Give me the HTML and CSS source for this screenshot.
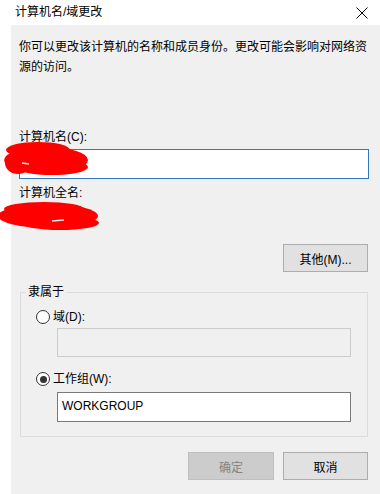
FILE: index.html
```html
<!doctype html>
<html lang="zh-CN">

<head>
	<meta charset="UTF-8">
	<title>计算机名/域更改</title>
	<link rel="stylesheet" href="styles.css">
</head>

<body>
	<div class="titlebar">
		<span class="title">计算机名/域更改</span>
		<svg class="close" width="12" height="12" viewBox="0 0 12 12">
			<path d="M0.5 0.5 L11.5 11.5 M11.5 0.5 L0.5 11.5" stroke="#000" stroke-width="1" fill="none" />
		</svg>
	</div>

	<div class="dialog">
		<p class="desc">你可以更改该计算机的名称和成员身份。更改可能会影响对网络资源的访问。</p>

		<div class="label label-first">计算机名(C):</div>
		<div class="field field-focus"></div>

		<div class="label label-full">计算机全名:</div>
		<div class="value"></div>

		<div class="row-right row-more">
			<button class="btn">其他(M)...</button>
		</div>

		<fieldset class="group">
			<legend>隶属于</legend>
			<div class="radio-row radio-first">
				<span class="radio"></span>
				<span>域(D):</span>
			</div>
			<div class="field field-disabled field-indent"></div>

			<div class="radio-row radio-second">
				<span class="radio checked"></span>
				<span>工作组(W):</span>
			</div>
			<div class="field field-plain field-indent">WORKGROUP</div>
		</fieldset>

		<div class="row-right row-actions">
			<button class="btn btn-disabled">确定</button>
			<button class="btn">取消</button>
		</div>
	</div>

	<!-- scribbled out names -->
	<svg class="redact" width="110" height="100" viewBox="0 140 110 100">
		<g fill="#ff0000">
			<ellipse cx="46" cy="160" rx="42" ry="13" />
			<ellipse cx="38" cy="150" rx="32" ry="8" />
			<ellipse cx="52" cy="167" rx="36" ry="8" />
			<ellipse cx="18" cy="163" rx="13" ry="11" />
			<ellipse cx="48" cy="216" rx="50" ry="12" />
			<ellipse cx="44" cy="209" rx="40" ry="7" />
			<ellipse cx="60" cy="223" rx="39" ry="7" />
		</g>
		<path d="M22 163 L29 164" stroke="#e8e0f0" stroke-width="1.5" />
		<path d="M52 221 L64 220" stroke="#ffe8e8" stroke-width="1.5" />
	</svg>
</body>

</html>
```

FILE: styles.css
```css
* {
	box-sizing: border-box;
	margin: 0;
	padding: 0;
}

body {
	width: 380px;
	height: 494px;
	overflow: hidden;
	background: #ffffff;
	color: #000000;
	font-family: "Liberation Sans", "Noto Sans CJK SC", sans-serif;
	font-size: 12px;
	line-height: 20px;
	position: relative;
}

.titlebar {
	height: 25px;
	display: flex;
	align-items: center;
	justify-content: space-between;
	padding: 0 12px 1px 15px;
}

.title {
	line-height: 20px;
}

.close {
	display: block;
	margin-top: 2px;
}

.dialog {
	margin-left: 11px;
	height: 469px;
	background: #f0f0f0;
	padding: 12px 11px 0 8px;
}

.desc {
	line-height: 20px;
}

.label-first {
	margin-top: 50px;
}

.label-full {
	margin-top: 4px;
}

.value {
	height: 20px;
}

.field {
	height: 30px;
	margin-top: 2px;
	background: #ffffff;
	border: 1px solid #7a7a7a;
	padding: 0 4px;
	line-height: 27px;
}

.field-focus {
	border-color: #3578c0;
}

.field-disabled {
	background: #f0f0f0;
	border-color: #cccccc;
	height: 29px;
	margin-top: 1px;
}

.field-plain {
	margin-top: 3px;
}

.field-indent {
	margin-left: 21px;
}

.row-right {
	display: flex;
	justify-content: flex-end;
	gap: 9px;
	padding-right: 1px;
}

.row-more {
	margin-top: 21px;
}

.row-actions {
	margin-top: 15px;
}

.btn {
	width: 85px;
	height: 28px;
	background: #e1e1e1;
	border: 1px solid #adadad;
	font-family: inherit;
	font-size: 12px;
	color: #000000;
}

.btn-disabled {
	width: 86px;
	background: #cccccc;
	border-color: #bfbfbf;
	color: #838383;
}

.group {
	margin: 10px 1px 0 1px;
	border: 1px solid #dcdcdc;
	padding: 0 16px 14px 15px;
}

.group legend {
	margin-left: -10px;
	padding: 0 2px;
	line-height: 20px;
}

.radio-row {
	display: flex;
	align-items: center;
	gap: 3px;
	height: 20px;
}

.radio-first {
	margin-top: 5px;
}

.radio-second {
	margin-top: 12px;
}

.radio {
	width: 14px;
	height: 14px;
	border: 1px solid #333333;
	border-radius: 50%;
	background: #ffffff;
	position: relative;
}

.radio.checked::after {
	content: "";
	position: absolute;
	left: 2.5px;
	top: 2.5px;
	width: 7px;
	height: 7px;
	border-radius: 50%;
	background: #333333;
}

.redact {
	position: absolute;
	left: 0;
	top: 140px;
}
```
